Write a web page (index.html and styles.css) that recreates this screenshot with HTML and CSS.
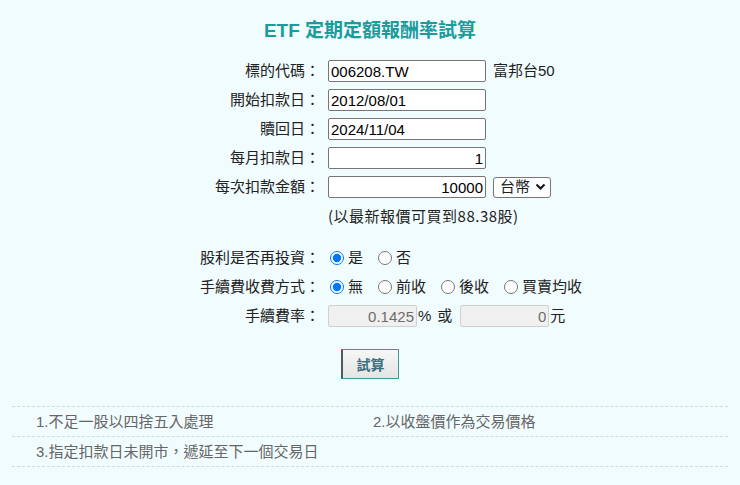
FILE: index.html
```html
<!DOCTYPE html>
<html lang="zh-Hant">
<head>
  <meta charset="UTF-8">
  <meta name="viewport" content="width=device-width, initial-scale=1.0">
  <title>ETF 定期定額報酬率試算</title>
  <link rel="stylesheet" href="styles.css">
</head>
<body>
  <div class="calc-container">
    <h1 class="calc-title">ETF 定期定額報酬率試算</h1>

    <div class="calc-form">
      <div class="form-row">
        <label class="form-label">標的代碼：</label>
        <div class="form-field">
          <input class="text-input" type="text" value="006208.TW">
          <span class="field-note">富邦台50</span>
        </div>
      </div>
      <div class="form-row">
        <label class="form-label">開始扣款日：</label>
        <div class="form-field">
          <input class="text-input" type="text" value="2012/08/01">
        </div>
      </div>
      <div class="form-row">
        <label class="form-label">贖回日：</label>
        <div class="form-field">
          <input class="text-input" type="text" value="2024/11/04">
        </div>
      </div>
      <div class="form-row">
        <label class="form-label">每月扣款日：</label>
        <div class="form-field">
          <input class="text-input num" type="text" value="1">
        </div>
      </div>
      <div class="form-row">
        <label class="form-label">每次扣款金額：</label>
        <div class="form-field">
          <input class="text-input num" type="text" value="10000">
          <div class="currency-select">
            台幣
            <svg width="11" height="8" viewBox="0 0 11 8"><path d="M1.5 1.5 L5.5 5.5 L9.5 1.5" fill="none" stroke="#111" stroke-width="2"/></svg>
          </div>
        </div>
      </div>
      <div class="form-row hint-row">
        <span class="form-label"></span>
        <div class="form-field">(以最新報價可買到88.38股)</div>
      </div>

      <div class="form-row radio-row first-radio">
        <label class="form-label">股利是否再投資：</label>
        <div class="form-field">
          <label class="radio-item"><input type="radio" name="reinvest" checked>是</label>
          <label class="radio-item"><input type="radio" name="reinvest">否</label>
        </div>
      </div>
      <div class="form-row radio-row">
        <label class="form-label">手續費收費方式：</label>
        <div class="form-field">
          <label class="radio-item"><input type="radio" name="fee" checked>無</label>
          <label class="radio-item"><input type="radio" name="fee">前收</label>
          <label class="radio-item"><input type="radio" name="fee">後收</label>
          <label class="radio-item"><input type="radio" name="fee">買賣均收</label>
        </div>
      </div>
      <div class="form-row">
        <label class="form-label">手續費率：</label>
        <div class="form-field">
          <input class="text-input num short" type="text" value="0.1425" disabled>
          <span class="unit">%</span>
          <span class="or-text">或</span>
          <input class="text-input num short" type="text" value="0" disabled>
          <span class="unit">元</span>
        </div>
      </div>
    </div>

    <div class="submit-wrap">
      <button class="submit-btn">試算</button>
    </div>

    <div class="notes">
      <div class="note-row">
        <span>1.不足一股以四捨五入處理</span>
        <span>2.以收盤價作為交易價格</span>
      </div>
      <div class="note-row">
        <span>3.指定扣款日未開市，遞延至下一個交易日</span>
      </div>
    </div>
  </div>
</body>
</html>
```

FILE: styles.css
```css
/* General body styles */
body {
  margin: 0;
  padding: 0;
  background: #f1fcfe;
  font-family: "Liberation Sans", "Noto Sans CJK TC", sans-serif;
  font-size: 15px;
  color: #222;
}

.calc-container {
  width: 716px;
  margin: 0 auto;
}

/* Title */
.calc-title {
  margin: 0;
  padding-top: 19px;
  height: 24px;
  line-height: 24px;
  text-align: center;
  font-size: 19px;
  font-weight: bold;
  color: #1a9b9c;
}

/* Form rows */
.calc-form {
  display: flex;
  flex-direction: column;
  gap: 7px;
  margin-top: 17px;
}

.form-row {
  display: grid;
  grid-template-columns: 308px 1fr;
  column-gap: 8px;
  height: 22px;
  align-items: center;
}

.form-label {
  text-align: right;
  line-height: 22px;
  white-space: nowrap;
}

.form-field {
  display: flex;
  align-items: center;
  line-height: 22px;
}

.text-input {
  box-sizing: border-box;
  width: 158px;
  height: 22px;
  padding: 0 2px;
  border: 1px solid #767676;
  border-radius: 2px;
  background: #fff;
  font-family: "Liberation Sans", sans-serif;
  font-size: 15px;
  color: #000;
}

.text-input.num {
  text-align: right;
}

.text-input.short {
  width: 89px;
}

.text-input:disabled {
  background: #f0f0f0;
  border-color: #d0d0d0;
  color: #6d6d6d;
}

.field-note {
  margin-left: 7px;
}

.currency-select {
  box-sizing: border-box;
  display: flex;
  align-items: center;
  gap: 5px;
  height: 21px;
  margin-left: 7px;
  padding: 0 4px 0 6px;
  border: 1px solid #767676;
  border-radius: 3px;
  background: #fff;
}

.hint-row .form-field {
  font-family: "Noto Sans CJK TC", sans-serif;
  letter-spacing: 0.5px;
}

/* Radio groups */
.radio-row.first-radio {
  margin-top: 13px;
}

.radio-item {
  display: flex;
  align-items: center;
  margin-right: 13px;
}

.radio-item input {
  width: 14px;
  height: 14px;
  margin: 0 4px 0 2px;
}

.unit {
  margin-left: 1px;
}

.or-text {
  margin: 0 8px 0 6px;
}

/* Submit button */
.submit-wrap {
  display: flex;
  justify-content: center;
  margin-top: 22px;
}

.submit-btn {
  box-sizing: border-box;
  width: 58px;
  height: 30px;
  padding: 0;
  border: 1px solid #3c9a9c;
  border-left: 2px solid #505a5c;
  background: linear-gradient(#f7f7f7, #e4e4e4);
  font-family: "Noto Sans CJK TC", sans-serif;
  font-size: 14px;
  font-weight: bold;
  color: #3b6f7c;
  cursor: pointer;
}

/* Notes at the bottom */
.notes {
  margin-top: 27px;
  border-top: 1px dashed #cfdcdf;
}

.note-row {
  display: grid;
  grid-template-columns: 337px 1fr;
  height: 29px;
  line-height: 29px;
  padding-left: 24px;
  border-bottom: 1px dashed #cfdcdf;
  color: #666;
}
```
